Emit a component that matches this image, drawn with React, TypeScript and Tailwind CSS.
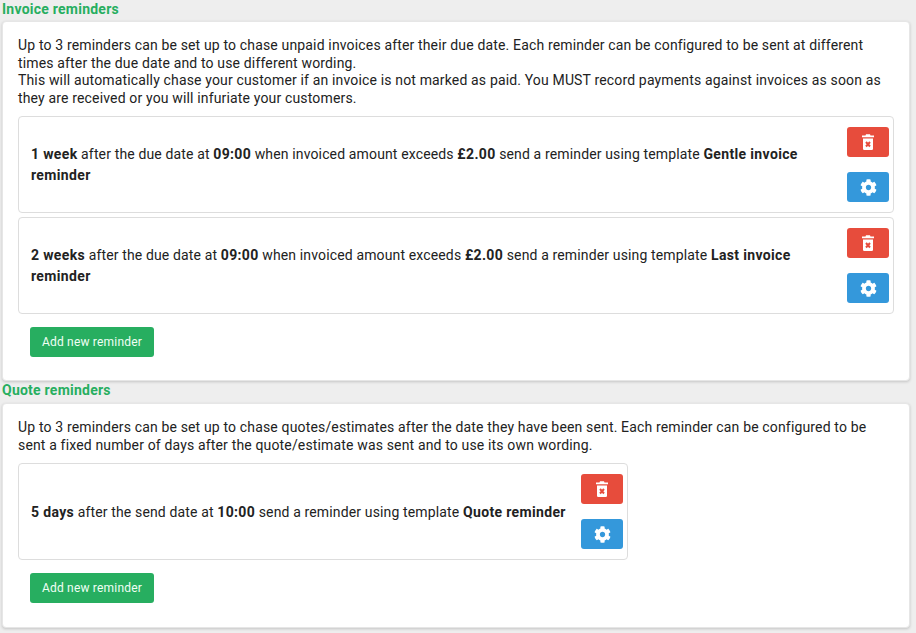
import { FaCog } from "react-icons/fa";

type Part = { text: string; bold?: boolean };

function TrashIcon() {
  return (
    <svg width="12" height="16" viewBox="0 0 12 16" aria-hidden="true">
      <path d="M3.5 1.5 L4 .3 H8 L8.5 1.5 H12 V3.2 H0 V1.5 Z" fill="#fff" />
      <path d="M1 4.5 H11 V14.8 Q11 16 9.8 16 H2.2 Q1 16 1 14.8 Z" fill="#fff" />
      <path d="M4 8 L8 12.5 M8 8 L4 12.5" stroke="#e74c3c" strokeWidth="2" />
    </svg>
  );
}

function ReminderCard({ parts, narrow }: { parts: Part[]; narrow?: boolean }) {
  return (
    <div className={`flex items-center gap-3 rounded border border-[#dddddd] bg-white px-3 py-[10px] ${narrow ? "w-[610px]" : ""}`}>
      <p className="flex-1 pt-[1px] text-[14px] leading-[21px] tracking-[0.14px] text-[#222222]">
        {parts.map((p, i) =>
          p.bold ? (
            <b key={i} className="tracking-[0.35px]">
              {p.text}
            </b>
          ) : (
            <span key={i}>{p.text}</span>
          ),
        )}
      </p>
      <div className="ml-[2px] mr-[-8px] flex w-[42px] shrink-0 flex-col gap-[15px]">
        <button className="flex h-[30px] w-[42px] items-center justify-center rounded-[3px] bg-[#e74c3c]">
          <TrashIcon />
        </button>
        <button className="flex h-[30px] w-[42px] items-center justify-center rounded-[3px] bg-[#3498db] text-white">
          <FaCog size={17} />
        </button>
      </div>
    </div>
  );
}

function AddButton() {
  return (
    <button className="ml-3 mt-[13px] block h-[30px] w-[124px] rounded-[3px] bg-[#27ae60] pb-[1px] text-[12px] tracking-[0.2px] text-[#f0fff5]">
      Add new reminder
    </button>
  );
}

export default function App() {
  return (
    <div className="min-h-[633px] bg-[#eeeeee] pl-[2px] pr-[6px] font-['Roboto',sans-serif] text-[14px] text-[#222222]">
      <h3 className="h-[21px] pt-[1px] text-[14px] font-bold leading-[17px] tracking-[0.24px] text-[#27ae60]">Invoice reminders</h3>
      <section className="h-[360px] rounded border border-[#e6e6e6] bg-white px-[15px] pt-[15px] shadow-[0_1px_3px_rgba(0,0,0,0.18)]">
        <p className="leading-[17.6px] tracking-[0.155px]">
          Up to 3 reminders can be set up to chase unpaid invoices after their due date. Each reminder can be configured to be sent at different times after the due date and to use different wording.
          <br />
          This will automatically chase your customer if an invoice is not marked as paid. You MUST record payments against invoices as soon as they are received or you will infuriate your customers.
        </p>
        <div className="mt-[9px] flex flex-col gap-[4px]">
          <ReminderCard
            parts={[
              { text: "1 week", bold: true },
              { text: " after the due date at " },
              { text: "09:00", bold: true },
              { text: " when invoiced amount exceeds " },
              { text: "£2.00", bold: true },
              { text: " send a reminder using template " },
              { text: "Gentle invoice reminder", bold: true },
            ]}
          />
          <ReminderCard
            parts={[
              { text: "2 weeks", bold: true },
              { text: " after the due date at " },
              { text: "09:00", bold: true },
              { text: " when invoiced amount exceeds " },
              { text: "£2.00", bold: true },
              { text: " send a reminder using template " },
              { text: "Last invoice reminder", bold: true },
            ]}
          />
        </div>
        <AddButton />
      </section>
      <h3 className="h-[22px] pt-[1px] text-[14px] font-bold leading-[17px] tracking-[0.24px] text-[#27ae60]">Quote reminders</h3>
      <section className="h-[225px] rounded border border-[#e6e6e6] bg-white px-[15px] pt-[15px] shadow-[0_1px_3px_rgba(0,0,0,0.18)]">
        <p className="leading-[17.6px] tracking-[0.155px]">
          Up to 3 reminders can be set up to chase quotes/estimates after the date they have been sent. Each reminder can be configured to be sent a fixed number of days after the quote/estimate was sent and to use its own wording.
        </p>
        <div className="mt-[9px]">
          <ReminderCard
            narrow
            parts={[
              { text: "5 days", bold: true },
              { text: " after the send date at " },
              { text: "10:00", bold: true },
              { text: " send a reminder using template " },
              { text: "Quote reminder", bold: true },
            ]}
          />
        </div>
        <AddButton />
      </section>
    </div>
  );
}
